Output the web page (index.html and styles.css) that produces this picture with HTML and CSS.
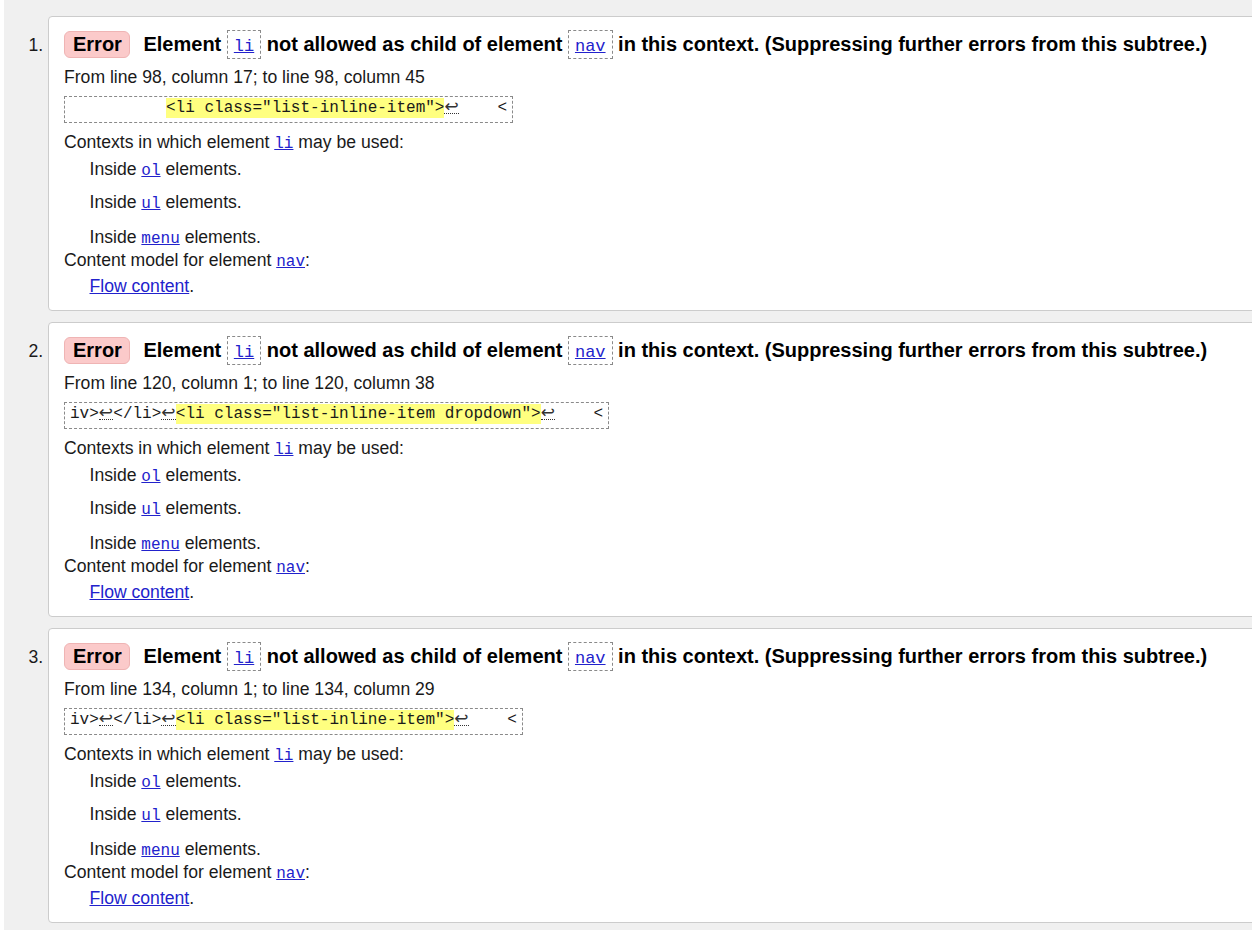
FILE: index.html
```html
<!DOCTYPE html>
<html lang="en">
<head>
<meta charset="utf-8">
<title>Validation results</title>
<link rel="stylesheet" href="styles.css">
</head>
<body>
<div class="page">
  <ol class="messages">
    <li class="msg">
      <p class="head"><strong class="badge">Error</strong> <span>Element <code class="kw"><a href="#">li</a></code> not allowed as child of element <code class="kw"><a href="#">nav</a></code> in this context. (Suppressing further errors from this subtree.)</span></p>
      <p class="loc">From line 98, column 17; to line 98, column 45</p>
      <p class="extract"><code>          <mark>&lt;li class="list-inline-item"&gt;</mark><abbr class="lf" title="Line feed">↩</abbr>    &lt;</code></p>
      <dl class="details">
        <dt>Contexts in which element <a href="#"><code>li</code></a> may be used:</dt>
        <dd class="d1">Inside <a href="#"><code>ol</code></a> elements.</dd>
        <dd class="d2">Inside <a href="#"><code>ul</code></a> elements.</dd>
        <dd class="d3">Inside <a href="#"><code>menu</code></a> elements.</dd>
        <dt class="t2">Content model for element <a href="#"><code>nav</code></a>:</dt>
        <dd class="d4"><a href="#">Flow content</a>.</dd>
      </dl>
    </li>
    <li class="msg">
      <p class="head"><strong class="badge">Error</strong> <span>Element <code class="kw"><a href="#">li</a></code> not allowed as child of element <code class="kw"><a href="#">nav</a></code> in this context. (Suppressing further errors from this subtree.)</span></p>
      <p class="loc">From line 120, column 1; to line 120, column 38</p>
      <p class="extract"><code>iv&gt;<abbr class="lf" title="Line feed">↩</abbr>&lt;/li&gt;<abbr class="lf" title="Line feed">↩</abbr><mark>&lt;li class="list-inline-item dropdown"&gt;</mark><abbr class="lf" title="Line feed">↩</abbr>    &lt;</code></p>
      <dl class="details">
        <dt>Contexts in which element <a href="#"><code>li</code></a> may be used:</dt>
        <dd class="d1">Inside <a href="#"><code>ol</code></a> elements.</dd>
        <dd class="d2">Inside <a href="#"><code>ul</code></a> elements.</dd>
        <dd class="d3">Inside <a href="#"><code>menu</code></a> elements.</dd>
        <dt class="t2">Content model for element <a href="#"><code>nav</code></a>:</dt>
        <dd class="d4"><a href="#">Flow content</a>.</dd>
      </dl>
    </li>
    <li class="msg">
      <p class="head"><strong class="badge">Error</strong> <span>Element <code class="kw"><a href="#">li</a></code> not allowed as child of element <code class="kw"><a href="#">nav</a></code> in this context. (Suppressing further errors from this subtree.)</span></p>
      <p class="loc">From line 134, column 1; to line 134, column 29</p>
      <p class="extract"><code>iv&gt;<abbr class="lf" title="Line feed">↩</abbr>&lt;/li&gt;<abbr class="lf" title="Line feed">↩</abbr><mark>&lt;li class="list-inline-item"&gt;</mark><abbr class="lf" title="Line feed">↩</abbr>    &lt;</code></p>
      <dl class="details">
        <dt>Contexts in which element <a href="#"><code>li</code></a> may be used:</dt>
        <dd class="d1">Inside <a href="#"><code>ol</code></a> elements.</dd>
        <dd class="d2">Inside <a href="#"><code>ul</code></a> elements.</dd>
        <dd class="d3">Inside <a href="#"><code>menu</code></a> elements.</dd>
        <dt class="t2">Content model for element <a href="#"><code>nav</code></a>:</dt>
        <dd class="d4"><a href="#">Flow content</a>.</dd>
      </dl>
    </li>
  </ol>
</div>
</body>
</html>
```
FILE: styles.css
```css
html, body {
  margin: 0;
  padding: 0;
  background: #ffffff;
}

body {
  font-family: "Liberation Sans", Arial, sans-serif;
  font-size: 17.6px;
  color: #1a1a1a;
}

.page {
  margin-left: 4px;
  background: #f0f0f0;
  min-height: 100vh;
  overflow: hidden;
}

.messages {
  margin: 0;
  padding: 16px 0 0 44px;
  list-style: decimal;
}

.msg {
  background: #ffffff;
  border: 1px solid #cccccc;
  border-radius: 4px;
  margin: 0 -24px 11px 0;
  padding: 13px 15px 12px 15px;
}

.msg::marker {
  font-family: "Liberation Sans", Arial, sans-serif;
  font-size: 17.6px;
  color: #1a1a1a;
}

a {
  color: #2222cc;
  text-decoration: underline;
}

code {
  font-family: "Liberation Mono", "Courier New", monospace;
  font-size: 16px;
  line-height: 16px;
}

.head {
  margin: 0;
  font-size: 20px;
  font-weight: bold;
  line-height: 29px;
  white-space: nowrap;
  color: #000000;
}

.badge {
  display: inline-block;
  background: #fbcaca;
  border: 1px solid #efb4b4;
  border-radius: 6px;
  line-height: 25px;
  padding: 0 7px 0 8px;
  margin-right: 8px;
  font-weight: bold;
}

.kw {
  display: inline-block;
  border: 1px dashed #8a8a8a;
  padding: 5px 6px 0 6px;
  font-size: 17px;
  line-height: 22px;
  font-weight: normal;
}

.loc {
  margin: 6px 0 0 0;
  line-height: 24px;
}

.extract {
  margin: 7px 0 0 0;
  display: inline-block;
  border: 1px dashed #8a8a8a;
  padding: 0 5px 2px 5px;
  font-family: "Liberation Mono", "Courier New", monospace;
  font-size: 16px;
  line-height: 23px;
  white-space: pre;
  vertical-align: top;
}

.extract code {
  line-height: 23px;
  color: #1a1a1a;
}

mark {
  background: #ffff80;
  color: #1a1a1a;
  padding: 1px 0;
}

.lf {
  display: inline-block;
  width: 14.5px;
  font-family: "DejaVu Sans", sans-serif;
  font-size: 17px;
  line-height: 14px;
  color: #333333;
  text-decoration: none;
  border-bottom: 1px dotted #333333;
  vertical-align: baseline;
}

.details {
  margin: 7px 0 0 0;
  line-height: 24px;
}

.details dt,
.details dd {
  margin: 0;
}

.details dd {
  margin-left: 25.5px;
}

.details dd.d1 {
  margin-top: 3px;
}

.details dd.d2 {
  margin-top: 9px;
}

.details dd.d3 {
  margin-top: 10.5px;
}

.details dt.t2 {
  margin-top: -0.5px;
}

.details dd.d4 {
  margin-top: 2px;
}
```
